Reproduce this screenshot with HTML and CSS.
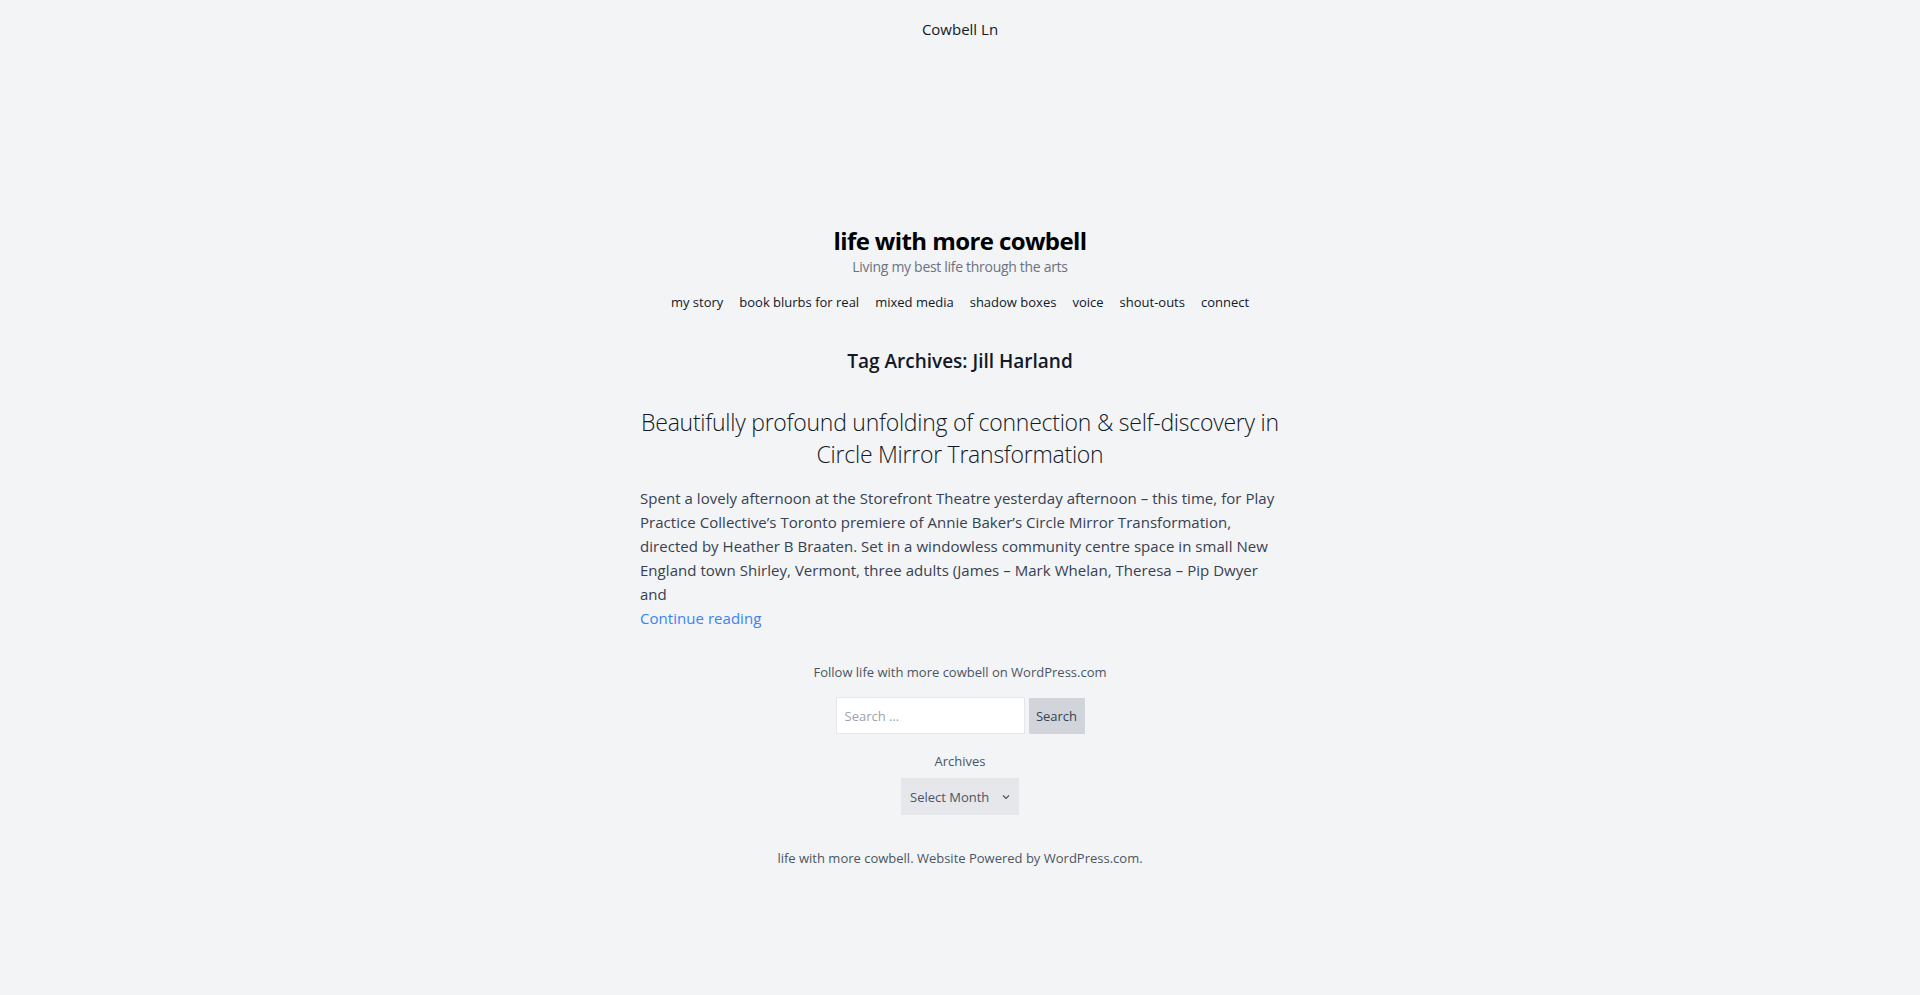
FILE: index.html
```html
<!DOCTYPE html>
<html lang="en">
<head>
<meta charset="utf-8">
<title>Jill Harland – life with more cowbell</title>
<link rel="stylesheet" href="styles.css">
</head>
<body>
<div class="topbar"><a href="#" class="topbar-link">Cowbell Ln</a></div>
<header class="site-header">
  <h1 class="site-title">life with more cowbell</h1>
  <p class="site-tagline">Living my best life through the arts</p>
  <nav class="main-nav">
    <a href="#">my story</a>
    <a href="#">book blurbs for real</a>
    <a href="#">mixed media</a>
    <a href="#">shadow boxes</a>
    <a href="#">voice</a>
    <a href="#">shout-outs</a>
    <a href="#">connect</a>
  </nav>
</header>
<main class="content">
  <h2 class="archive-title">Tag Archives: Jill Harland</h2>
  <article class="post">
    <h3 class="post-title">Beautifully profound unfolding of connection &amp; self-discovery in Circle Mirror Transformation</h3>
    <p class="post-excerpt">Spent a lovely afternoon at the Storefront Theatre yesterday afternoon – this time, for Play Practice Collective’s Toronto premiere of Annie Baker’s Circle Mirror Transformation, directed by Heather B Braaten. Set in a windowless community centre space in small New England town Shirley, Vermont, three adults (James – Mark Whelan, Theresa – Pip Dwyer and<br><a href="#" class="more-link">Continue reading</a></p>
  </article>
</main>
<aside class="widgets">
  <p class="follow">Follow life with more cowbell on WordPress.com</p>
  <form class="search-form">
    <input type="search" class="search-field" placeholder="Search …">
    <button type="button" class="search-btn">Search</button>
  </form>
  <p class="widget-title">Archives</p>
  <div class="select-box">Select Month
    <svg class="chev" width="10" height="10" viewBox="0 0 10 10"><path d="M2 3.5 L5 6.5 L8 3.5" fill="none" stroke="#4b5563" stroke-width="1.2"/></svg>
  </div>
</aside>
<footer class="site-footer">life with more cowbell. Website Powered by WordPress.com.</footer>
</body>
</html>
```
FILE: styles.css
```css
html, body { margin: 0; padding: 0; }
body {
  background: #f3f4f6;
  font-family: "Open Sans", "Noto Sans", sans-serif;
  color: #374151;
  min-height: 995px;
}
a { text-decoration: none; color: inherit; }
.topbar {
  padding-top: 17px;
  text-align: center;
  font-size: 15px;
  line-height: 24px;
}
.topbar-link { color: #111827; }
.site-header { margin-top: 184px; text-align: center; }
.site-title {
  margin: 0;
  font-size: 24px;
  line-height: 32px;
  font-weight: 700;
  color: #000;
  letter-spacing: -0.6px;
}
.site-tagline {
  margin: 0;
  font-size: 14px;
  line-height: 20px;
  color: #6b7280;
  letter-spacing: -0.3px;
}
.main-nav {
  margin-top: 15px;
  display: flex;
  justify-content: center;
  gap: 16px;
  font-size: 13px;
  line-height: 20px;
}
.main-nav a { color: #111827; }
.content { width: 640px; margin: 0 auto; }
.archive-title {
  margin: 35px 0 0;
  text-align: center;
  font-size: 19px;
  line-height: 28px;
  font-weight: 600;
  color: #111827;
}
.post-title {
  margin: 31px 0 0;
  text-align: center;
  font-size: 23px;
  line-height: 32px;
  font-weight: 300;
  color: #111827;
  letter-spacing: -0.25px;
}
.post-excerpt {
  margin: 16px 0 0;
  font-size: 15px;
  line-height: 24px;
  color: #374151;
  letter-spacing: 0.04px;
}
.more-link { color: #3b82f6; }
.widgets { text-align: center; margin-top: 32px; }
.follow {
  margin: 0;
  font-size: 13px;
  line-height: 20px;
  color: #4b5563;
}
.search-form {
  margin-top: 15px;
  display: flex;
  justify-content: center;
  align-items: center;
  gap: 4px;
}
.search-field {
  box-sizing: border-box;
  width: 189px;
  height: 37px;
  margin: 0;
  padding: 0 8px;
  border: 1px solid #e5e7eb;
  background: #fff;
  font-family: inherit;
  font-size: 13px;
  color: #374151;
  outline: none;
}
.search-field::placeholder { color: #9ca3af; }
.search-btn {
  box-sizing: border-box;
  width: 56px;
  height: 36px;
  margin: 0;
  padding: 0;
  border: none;
  background: #d1d5db;
  font-family: inherit;
  font-size: 13px;
  color: #374151;
}
.widget-title {
  margin: 17px 0 0;
  font-size: 13px;
  line-height: 20px;
  color: #4b5563;
}
.select-box {
  box-sizing: border-box;
  margin: 7px auto 0;
  width: 118px;
  height: 37px;
  padding: 0 8px 0 9px;
  display: flex;
  align-items: center;
  justify-content: space-between;
  background: #e5e7eb;
  font-size: 13px;
  color: #4b5563;
}
.chev { display: block; }
.site-footer {
  margin-top: 33px;
  text-align: center;
  font-size: 13px;
  line-height: 20px;
  color: #4b5563;
}
```
